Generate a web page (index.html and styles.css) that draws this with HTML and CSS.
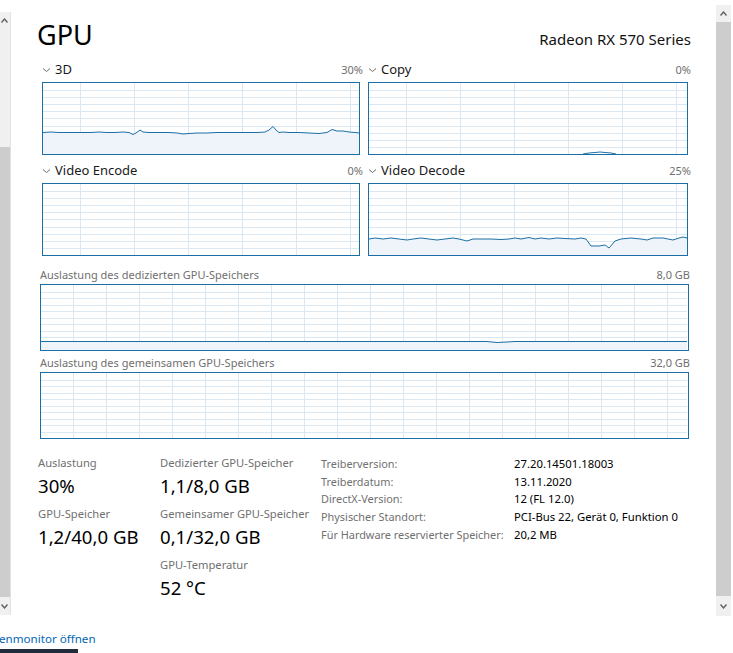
FILE: index.html
```html
<!DOCTYPE html>
<html lang="de">
<head>
<meta charset="utf-8">
<title>GPU</title>
<link rel="stylesheet" href="styles.css">
</head>
<body>
<div class="frame">
  <div class="sb sb-left">
    <div class="sb-btn sb-btn-top"><svg width="7" height="5" viewBox="0 0 7 5"><path d="M0.5 4.5L3.5 1L6.5 4.5" class="arrow"/></svg></div>
    <div class="sb-track"></div>
    <div class="sb-thumb"></div>
    <div class="sb-btn sb-btn-bottom"><svg width="7" height="5" viewBox="0 0 7 5"><path d="M0.5 0.5L3.5 4L6.5 0.5" class="arrow"/></svg></div>
  </div>

  <main class="content">
    <header class="head">
      <h1 class="title">GPU</h1>
      <div class="adapter">Radeon RX 570 Series</div>
    </header>

    <section class="engines">
      <div class="engine">
        <div class="engine-head">
          <svg class="chev" width="7" height="4" viewBox="0 0 7 4"><path d="M0 0.5L3.5 3.5L7 0.5"/></svg>
          <span class="engine-name">3D</span>
          <span class="engine-pct">30%</span>
        </div>
        <div class="graph graph-left">
          <svg class="plot" width="316" height="71" viewBox="0 0 316 71">
            <path class="grid" d="M37.5 0V71M91.5 0V71M145.5 0V71M199.5 0V71M253.5 0V71M307.5 0V71M0 7.5H316M0 14.5H316M0 21.5H316M0 28.5H316M0 35.5H316M0 43.5H316M0 50.5H316M0 57.5H316M0 64.5H316"/>
            <polygon class="area" points="0,49.5 8,49 16,49.5 24,49.5 32,49.5 40,49.5 48,49.5 56,49 64,49.5 72,49.5 80,49 86,49.5 90,51.5 93,50 97,47 100,49 106,49.5 116,49.5 126,49.5 134,50 140,51 146,50.5 154,50 164,50 174,49.5 184,49.5 194,49.5 204,49.5 214,49.5 222,49 226,47 230,43.5 233,47 236,49.5 240,49 246,49.5 256,49.5 266,50 276,50.5 284,49.5 289,46.5 294,48 300,48 306,49 312,49.5 316,50 316,71 0,71"/>
            <polyline class="line" points="0,49.5 8,49 16,49.5 24,49.5 32,49.5 40,49.5 48,49.5 56,49 64,49.5 72,49.5 80,49 86,49.5 90,51.5 93,50 97,47 100,49 106,49.5 116,49.5 126,49.5 134,50 140,51 146,50.5 154,50 164,50 174,49.5 184,49.5 194,49.5 204,49.5 214,49.5 222,49 226,47 230,43.5 233,47 236,49.5 240,49 246,49.5 256,49.5 266,50 276,50.5 284,49.5 289,46.5 294,48 300,48 306,49 312,49.5 316,50"/>
          </svg>
        </div>
      </div>

      <div class="engine">
        <div class="engine-head">
          <svg class="chev" width="7" height="4" viewBox="0 0 7 4"><path d="M0 0.5L3.5 3.5L7 0.5"/></svg>
          <span class="engine-name">Copy</span>
          <span class="engine-pct">0%</span>
        </div>
        <div class="graph graph-right">
          <svg class="plot" width="318" height="71" viewBox="0 0 318 71">
            <path class="grid" d="M37.5 0V71M91.5 0V71M145.5 0V71M199.5 0V71M253.5 0V71M307.5 0V71M0 7.5H318M0 14.5H318M0 21.5H318M0 28.5H318M0 35.5H318M0 43.5H318M0 50.5H318M0 57.5H318M0 64.5H318"/>
            <polyline class="line" points="214,71 220,70 226,69.5 231,69 236,69.5 242,70 247,71"/>
          </svg>
        </div>
      </div>

      <div class="engine">
        <div class="engine-head">
          <svg class="chev" width="7" height="4" viewBox="0 0 7 4"><path d="M0 0.5L3.5 3.5L7 0.5"/></svg>
          <span class="engine-name">Video Encode</span>
          <span class="engine-pct">0%</span>
        </div>
        <div class="graph graph-left">
          <svg class="plot" width="316" height="71" viewBox="0 0 316 71">
            <path class="grid" d="M37.5 0V71M91.5 0V71M145.5 0V71M199.5 0V71M253.5 0V71M307.5 0V71M0 7.5H316M0 14.5H316M0 21.5H316M0 28.5H316M0 35.5H316M0 43.5H316M0 50.5H316M0 57.5H316M0 64.5H316"/>
          </svg>
        </div>
      </div>

      <div class="engine">
        <div class="engine-head">
          <svg class="chev" width="7" height="4" viewBox="0 0 7 4"><path d="M0 0.5L3.5 3.5L7 0.5"/></svg>
          <span class="engine-name">Video Decode</span>
          <span class="engine-pct">25%</span>
        </div>
        <div class="graph graph-right">
          <svg class="plot" width="318" height="71" viewBox="0 0 318 71">
            <path class="grid" d="M37.5 0V71M91.5 0V71M145.5 0V71M199.5 0V71M253.5 0V71M307.5 0V71M0 7.5H318M0 14.5H318M0 21.5H318M0 28.5H318M0 35.5H318M0 43.5H318M0 50.5H318M0 57.5H318M0 64.5H318"/>
            <polygon class="area" points="0,55 6,54 14,55 22,54 30,55 38,56 44,55 52,54 60,55 68,56 76,55 84,54 90,55 98,57 104,55 112,55 122,55 132,55.5 140,55 146,54 152,55 160,53.5 166,55 172,54 180,55 188,54 196,54.5 206,55 212,54 217,55 222,62 230,62 236,61 240,64 246,57 252,55 262,54 272,55 278,56 284,54 294,54 304,56 310,54 314,53 318,54 318,71 0,71"/>
            <polyline class="line" points="0,55 6,54 14,55 22,54 30,55 38,56 44,55 52,54 60,55 68,56 76,55 84,54 90,55 98,57 104,55 112,55 122,55 132,55.5 140,55 146,54 152,55 160,53.5 166,55 172,54 180,55 188,54 196,54.5 206,55 212,54 217,55 222,62 230,62 236,61 240,64 246,57 252,55 262,54 272,55 278,56 284,54 294,54 304,56 310,54 314,53 318,54"/>
          </svg>
        </div>
      </div>
    </section>

    <section class="memgraph">
      <div class="mem-head">
        <span>Auslastung des dedizierten GPU-Speichers</span>
        <span>8,0 GB</span>
      </div>
      <div class="graph graph-mem">
        <svg class="plot" width="646" height="65" viewBox="0 0 646 65">
          <path class="grid" d="M32.5 0V65M65.5 0V65M98.5 0V65M131.5 0V65M164.5 0V65M197.5 0V65M230.5 0V65M263.5 0V65M296.5 0V65M329.5 0V65M362.5 0V65M395.5 0V65M428.5 0V65M461.5 0V65M494.5 0V65M527.5 0V65M560.5 0V65M593.5 0V65M626.5 0V65M0 7.5H646M0 13.5H646M0 20.5H646M0 26.5H646M0 33.5H646M0 39.5H646M0 46.5H646M0 52.5H646M0 59.5H646"/>
          <polygon class="area" points="0,56.5 438,56.5 446,56.5 456,57.5 466,57 474,56.5 646,56.5 646,65 0,65"/>
          <polyline class="line" points="0,56.5 438,56.5 446,56.5 456,57.5 466,57 474,56.5 646,56.5"/>
        </svg>
      </div>
    </section>

    <section class="memgraph memgraph-shared">
      <div class="mem-head">
        <span>Auslastung des gemeinsamen GPU-Speichers</span>
        <span>32,0 GB</span>
      </div>
      <div class="graph graph-mem">
        <svg class="plot" width="646" height="65" viewBox="0 0 646 65">
          <path class="grid" d="M32.5 0V65M65.5 0V65M98.5 0V65M131.5 0V65M164.5 0V65M197.5 0V65M230.5 0V65M263.5 0V65M296.5 0V65M329.5 0V65M362.5 0V65M395.5 0V65M428.5 0V65M461.5 0V65M494.5 0V65M527.5 0V65M560.5 0V65M593.5 0V65M626.5 0V65M0 7.5H646M0 13.5H646M0 20.5H646M0 26.5H646M0 33.5H646M0 39.5H646M0 46.5H646M0 52.5H646M0 59.5H646"/>
        </svg>
      </div>
    </section>

    <section class="stats">
      <div class="stat-col stat-col-1">
        <div class="stat">
          <div class="stat-label">Auslastung</div>
          <div class="stat-value">30%</div>
        </div>
        <div class="stat">
          <div class="stat-label">GPU-Speicher</div>
          <div class="stat-value">1,2/40,0 GB</div>
        </div>
      </div>
      <div class="stat-col stat-col-2">
        <div class="stat">
          <div class="stat-label">Dedizierter GPU-Speicher</div>
          <div class="stat-value">1,1/8,0 GB</div>
        </div>
        <div class="stat">
          <div class="stat-label">Gemeinsamer GPU-Speicher</div>
          <div class="stat-value">0,1/32,0 GB</div>
        </div>
        <div class="stat">
          <div class="stat-label">GPU-Temperatur</div>
          <div class="stat-value">52 °C</div>
        </div>
      </div>
      <dl class="info">
        <dt>Treiberversion:</dt><dd>27.20.14501.18003</dd>
        <dt>Treiberdatum:</dt><dd>13.11.2020</dd>
        <dt>DirectX-Version:</dt><dd>12 (FL 12.0)</dd>
        <dt>Physischer Standort:</dt><dd>PCI-Bus 22, Gerät 0, Funktion 0</dd>
        <dt>Für Hardware reservierter Speicher:</dt><dd>20,2 MB</dd>
      </dl>
    </section>
  </main>

  <div class="sb sb-right">
    <div class="sb-btn sb-btn-top"><svg width="7" height="5" viewBox="0 0 7 5"><path d="M0.5 4.5L3.5 1L6.5 4.5" class="arrow"/></svg></div>
    <div class="sb-thumb"></div>
    <div class="sb-btn sb-btn-bottom"><svg width="7" height="5" viewBox="0 0 7 5"><path d="M0.5 0.5L3.5 4L6.5 0.5" class="arrow"/></svg></div>
  </div>
  <div class="edge"></div>
</div>

<footer class="footer">
  <a class="link" href="#">enmonitor öffnen</a>
  <div class="taskbar"></div>
</footer>
</body>
</html>
```

FILE: styles.css
```css
* { box-sizing: border-box; }

html, body {
  margin: 0;
  padding: 0;
}

body {
  width: 733px;
  height: 653px;
  overflow: hidden;
  background: #ffffff;
  font-family: "Noto Sans", "Segoe UI", sans-serif;
  color: #000000;
}

.frame {
  display: flex;
  height: 616px;
}

/* scrollbars */
.sb {
  display: flex;
  flex-direction: column;
  background: #f0f0f0;
  flex: none;
}

.sb-left {
  width: 11px;
  margin-top: 12px;
  height: 603px;
  border-right: 1px solid #e2e2e2;
}

.sb-right {
  width: 15px;
  margin-top: 5px;
  height: 611px;
}

.sb-btn {
  display: flex;
  align-items: center;
  justify-content: center;
  flex: none;
}

.sb-left .sb-btn-top { height: 16px; justify-content: flex-start; padding-left: 1px; }
.sb-left .sb-btn-bottom { height: 18px; justify-content: flex-start; padding-left: 1px; }
.sb-left .sb-track { height: 119px; flex: none; }
.sb-left .sb-thumb { flex: 1; background: #cdcdcd; }

.sb-right .sb-btn-top { height: 17px; }
.sb-right .sb-btn-bottom { height: 20px; }
.sb-right .sb-thumb { flex: 1; background: #cdcdcd; }

.arrow {
  fill: none;
  stroke: #606060;
  stroke-width: 1.4;
}

.edge {
  width: 2px;
  flex: none;
}

/* main content */
.content {
  flex: 1;
  min-width: 0;
  padding: 21px 27px 0 29px;
}

.head {
  display: flex;
  justify-content: space-between;
  align-items: baseline;
  height: 28px;
}

.title {
  margin: 0 0 0 -3px;
  font-size: 27px;
  line-height: 28px;
  font-weight: 400;
  color: #000;
}

.adapter {
  font-size: 15px;
  margin-right: -2px;
  color: #111;
}

.engines {
  margin-top: 12px;
  margin-left: 2px;
  display: grid;
  grid-template-columns: 318px 320px;
  column-gap: 8px;
  row-gap: 7px;
}

.engine-head {
  display: flex;
  align-items: center;
  height: 17px;
  margin-bottom: 4px;
  line-height: 17px;
}

.chev {
  margin-left: 1px;
  fill: none;
  stroke: #6a6a6a;
  stroke-width: 1;
  flex: none;
}

.engine-name {
  margin-left: 5px;
  font-size: 13px;
  color: #1a1a1a;
}

.engine-pct {
  margin-left: auto;
  margin-right: -3px;
  font-size: 11px;
  color: #707070;
}

.graph {
  border: 1px solid #1c6fa6;
  background: #ffffff;
  line-height: 0;
}

.graph-left { width: 318px; height: 73px; }
.graph-right { width: 320px; height: 73px; }
.graph-mem { width: 649px; height: 67px; }

.plot { display: block; }

.grid {
  fill: none;
  stroke: #d9e8f2;
  stroke-width: 1;
}

.area {
  fill: #eef4f9;
  stroke: none;
}

.line {
  fill: none;
  stroke: #1c6fa6;
  stroke-width: 1;
}

/* memory graphs */
.memgraph {
  margin-top: 11px;
}

.memgraph-shared {
  margin-top: 4px;
}

.mem-head {
  display: flex;
  justify-content: space-between;
  font-size: 11px;
  line-height: 15px;
  height: 15px;
  margin-bottom: 2px;
  color: #707070;
}

.mem-head span:last-child {
  margin-right: -1px;
}

/* stats */
.stats {
  display: flex;
  margin-top: 16px;
  margin-left: -2px;
}

.stat-col {
  display: flex;
  flex-direction: column;
  row-gap: 8px;
  flex: none;
}

.stat-col-1 { width: 122px; }
.stat-col-2 { width: 161px; }

.stat-label {
  font-size: 11.2px;
  line-height: 16px;
  color: #707070;
}

.stat-value {
  margin-top: 3px;
  font-size: 18.6px;
  line-height: 24px;
  color: #000;
}

.info {
  margin: 0;
  display: grid;
  grid-template-columns: 193px auto;
  align-content: start;
  font-size: 11.3px;
  line-height: 17.7px;
}

.info dt {
  color: #707070;
  font-size: 10.9px;
  white-space: nowrap;
}

.info dd {
  margin: 0;
  color: #000;
  white-space: nowrap;
}

/* footer */
.footer {
  height: 37px;
  padding-top: 15px;
}

.link {
  display: block;
  margin-left: -1px;
  font-size: 11.6px;
  line-height: 16px;
  color: #0066b4;
  text-decoration: none;
}

.taskbar {
  margin-top: 2px;
  width: 78px;
  height: 4px;
  background: #1f2b3a;
}
```
